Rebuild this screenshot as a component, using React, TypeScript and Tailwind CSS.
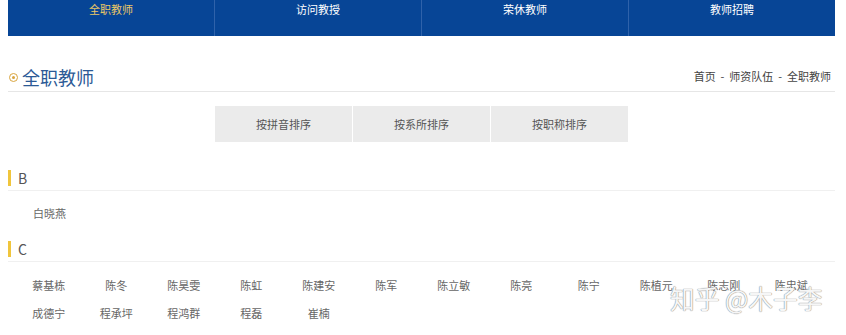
import React from "react";

const tabs = ["全职教师", "访问教授", "荣休教师", "教师招聘"];
const sorts = ["按拼音排序", "按系所排序", "按职称排序"];
const cRow1 = ["蔡基栋", "陈冬", "陈昊雯", "陈虹", "陈建安", "陈军", "陈立敏", "陈亮", "陈宁", "陈植元", "陈志刚", "陈忠斌"];
const cRow2 = ["成德宁", "程承坪", "程鸿群", "程磊", "崔楠"];

function Section({ letter }: { letter: string }) {
  return (
    <div className="flex items-center h-[16px] border-b border-[#f0f0f0] pb-[4px] box-content">
      <div className="w-[3px] h-[16px] bg-[#f0c53c]" />
      <span className="ml-[7px] text-[14px] leading-[16px] text-[#555]">{letter}</span>
    </div>
  );
}

export default function App() {
  return (
    <div
      className="relative w-[846px] h-[335px] bg-white overflow-hidden"
      style={{ fontFamily: '"Noto Sans CJK SC", "Liberation Sans", sans-serif' }}
    >
      <div className="mx-[8px] w-[827px] h-[36px] bg-[#074596] flex">
        {tabs.map((t, i) => (
          <div
            key={t}
            className={`flex-1 flex justify-center pt-[1px] text-[11px] leading-[16px] ${i < 3 ? "border-r border-[#2f62aa]" : ""} ${i === 0 ? "text-[#e9c766]" : "text-white"}`}
          >
            {t}
          </div>
        ))}
      </div>

      <div className="mx-[8px] w-[827px]">
        <div className="mt-[28px] flex items-center justify-between h-[28px] border-b border-[#e6e6e6]">
          <div className="flex items-center">
            <span className="ml-[1px] w-[9px] h-[9px] rounded-full border-[1.5px] border-[#d9a53f] flex items-center justify-center">
              <span className="w-[3px] h-[3px] rounded-full bg-[#d9a53f]" />
            </span>
            <span className="ml-[4px] text-[18px] leading-[24px] text-[#2c5a96] relative top-[-1px]">全职教师</span>
          </div>
          <div className="text-[11px] text-[#444] mr-[4px] relative top-[-1px] whitespace-pre">首页  -  师资队伍  -  全职教师</div>
        </div>

        <div className="mt-[14px] flex justify-center gap-[1px]">
          {sorts.map((s) => (
            <div key={s} className="w-[137px] h-[36px] bg-[#ebebeb] flex items-center justify-center text-[11px] text-[#555]">
              {s}
            </div>
          ))}
        </div>

        <div className="mt-[28px]">
          <Section letter="B" />
        </div>
        <div className="pl-[25px] h-[50px] pt-[14px] text-[11px] leading-[16px] text-[#666]">白晓燕</div>
        <Section letter="C" />
        <div className="pl-[7px] pt-[15px] grid grid-cols-[repeat(12,67.5px)] gap-y-[12px] text-[11px] leading-[16px] text-[#666]">
          {[...cRow1, ...cRow2].map((n, i) => (
            <div key={i} className="text-center">{n}</div>
          ))}
        </div>
      </div>

      <div
        className="absolute left-[670px] top-[283px] text-[26px] leading-[30px] text-[#f6f6f6] whitespace-pre origin-left scale-x-[0.95]"
        style={{ textShadow: "0 0 1px #8a8a8a, 0 0 1px #8a8a8a" }}
      >
        知乎 @木子李
      </div>
    </div>
  );
}
